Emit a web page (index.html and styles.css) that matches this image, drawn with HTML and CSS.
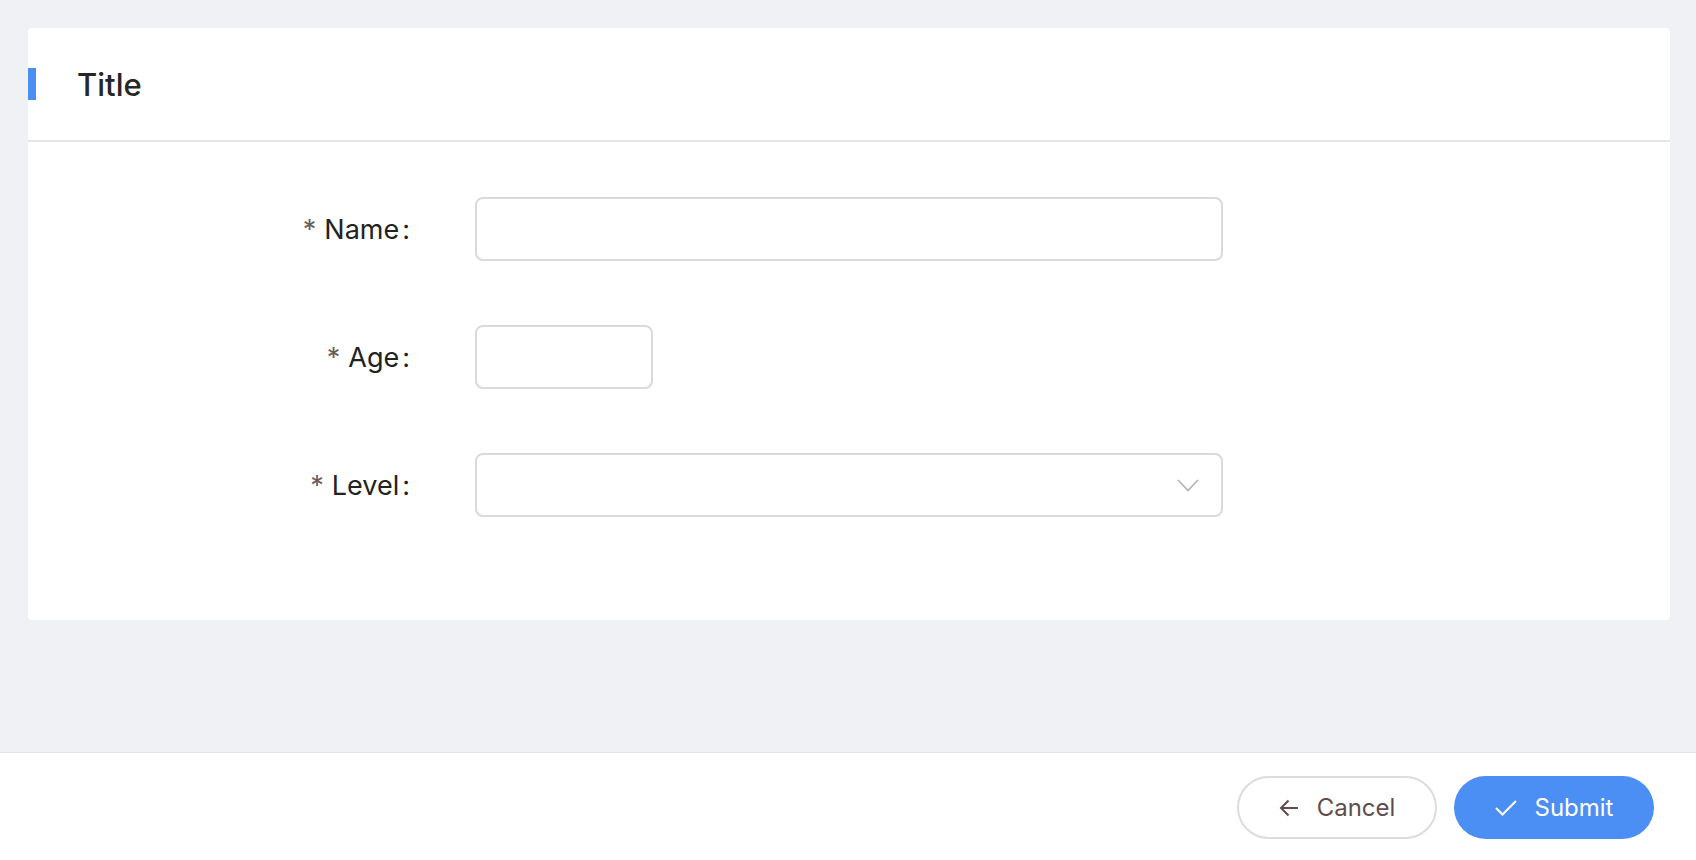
FILE: index.html
```html
<!DOCTYPE html>
<html lang="en">
<head>
  <meta charset="UTF-8">
  <meta name="viewport" content="width=device-width, initial-scale=1.0">
  <title>Form</title>
  <link rel="stylesheet" href="styles.css">
</head>
<body>
  <main class="page">
    <div class="card">
      <div class="card-header">
        <span class="title-bar"></span>
        <h1 class="card-title">Title</h1>
      </div>

      <form class="form">
        <div class="form-item">
          <label class="form-label" for="name"><span class="req">*</span>Name<span class="colon">:</span></label>
          <input id="name" class="input input-wide" type="text">
        </div>

        <div class="form-item">
          <label class="form-label" for="age"><span class="req">*</span>Age<span class="colon">:</span></label>
          <input id="age" class="input input-short" type="text">
        </div>

        <div class="form-item">
          <label class="form-label" for="level"><span class="req">*</span>Level<span class="colon">:</span></label>
          <div id="level" class="input input-wide select">
            <svg class="chevron" width="22" height="13" viewBox="0 0 22 13"><path d="M1 1 L11 11.5 L21 1" fill="none" stroke="#b5b5b5" stroke-width="1.8"/></svg>
          </div>
        </div>
      </form>
    </div>
  </main>

  <footer class="footer">
    <button class="btn btn-cancel" type="button">
      <svg width="20" height="18" viewBox="0 0 20 18"><path d="M19 9 H2 M9.5 1.5 L2 9 L9.5 16.5" fill="none" stroke="#5f4c4d" stroke-width="2"/></svg>
      Cancel
    </button>
    <button class="btn btn-submit" type="button">
      <svg width="22" height="16" viewBox="0 0 22 16"><path d="M1 8 L7.5 14.5 L21 1" fill="none" stroke="#fff" stroke-width="2"/></svg>
      Submit
    </button>
  </footer>
</body>
</html>
```

FILE: styles.css
```css
* { box-sizing: border-box; }
html, body { margin: 0; height: 100%; }
body { font-family: Inter, "Noto Sans", sans-serif; background: #f0f1f5; color: #222; display: flex; flex-direction: column; height: 860px; }

.page { flex: 1; padding: 28px 26px 0 28px; }
.card { background: #fff; border-radius: 4px; height: 592px; }

.card-header { height: 114px; border-bottom: 2px solid #e6e6e8; display: flex; align-items: center; }
.title-bar { width: 8px; height: 32px; background: #4b8ff5; margin-right: 41px; }
.card-title { margin: 0; font-size: 31px; font-weight: 500; color: #262626; letter-spacing: 0; }

.form { padding: 55px 0 0 230px; display: flex; flex-direction: column; gap: 64px; }
.form-item { display: flex; align-items: center; }
.form-label { width: 152px; text-align: right; font-size: 27px; color: #222; margin-right: 65px; white-space: nowrap; }
.req { color: #6b5b5c; margin-right: 8px; }
.colon { margin-left: 3px; }

.input { height: 64px; border: 2px solid #dadada; border-radius: 8px; background: #fff; font: inherit; outline: none; }
.input-wide { width: 748px; }
.input-short { width: 178px; }
.select { display: flex; align-items: center; justify-content: flex-end; padding-right: 22px; }

.footer { height: 108px; background: #fff; border-top: 1px solid #e4e4e8; display: flex; justify-content: flex-end; align-items: center; gap: 17px; padding: 2px 42px 0 0; }
.btn { height: 63px; width: 200px; border-radius: 32px; font-family: inherit; font-size: 24px; display: flex; align-items: center; justify-content: center; gap: 18px; cursor: pointer; }
.btn-cancel { background: #fff; border: 2px solid #dcdcdc; color: #5f4c4d; }
.btn-submit { background: #4b8ff5; border: none; color: #fff; }
```
